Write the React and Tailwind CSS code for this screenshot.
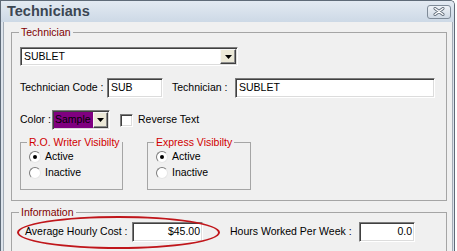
import React from 'react';

const sunken =
  'border border-t-[#7c7c7c] border-l-[#7c7c7c] border-b-white border-r-white shadow-[inset_1px_1px_0_#404040,inset_-1px_-1px_0_#dcdcdc] bg-white';
const raised =
  'border border-t-[#f6f6f6] border-l-[#f6f6f6] border-b-[#404040] border-r-[#404040] shadow-[inset_-1px_-1px_0_#8c8c8c] bg-[#ece9d8]';

const Arrow = () => (
  <svg width="7" height="4" viewBox="0 0 7 4">
    <polygon points="0,0 7,0 3.5,4" fill="#000" />
  </svg>
);

const CloseButton = () => (
  <div className="w-[24px] h-[14px] rounded-[3px] border border-[#7f8b98] bg-gradient-to-b from-[#eef2f7] to-[#cfd9e4] flex items-center justify-center">
    <svg width="12" height="9" viewBox="0 0 12 9">
      <path d="M2 1.5 L10 7.5 M10 1.5 L2 7.5" stroke="#5f6b78" strokeWidth="3" strokeLinecap="round" />
      <path d="M2 1.5 L10 7.5 M10 1.5 L2 7.5" stroke="#ffffff" strokeWidth="1.4" strokeLinecap="round" />
    </svg>
  </div>
);

const Field = ({ className, children, right }) => (
  <div className={`h-[20px] shrink-0 ${sunken} flex items-center ${right ? 'justify-end pr-[2px]' : 'pl-[3px]'} ${className}`}>
    {children}
  </div>
);

const Radio = ({ checked, label }) => (
  <div className="h-[16px] flex items-center gap-[4px]">
    <div className="w-[12px] h-[12px] rounded-full border border-t-[#7c7c7c] border-l-[#7c7c7c] border-b-[#e6e6e6] border-r-[#e6e6e6] bg-white flex items-center justify-center">
      {checked && <div className="w-[4px] h-[4px] rounded-full bg-black" />}
    </div>
    <span>{label}</span>
  </div>
);

const SubGroup = ({ title, className }) => (
  <fieldset className={`h-[54px] shrink-0 border border-[#a5a5a5] ${className}`}>
    <legend className="ml-[6px] px-[2px] leading-[13px] text-[#d00000]">{title}</legend>
    <div className="pl-[8px]">
      <Radio checked label="Active" />
      <Radio label="Inactive" />
    </div>
  </fieldset>
);

export default function App() {
  return (
    <div className="w-[457px] h-[251px] overflow-hidden bg-white font-['Liberation_Sans',Arial,sans-serif] text-[10.5px] text-black whitespace-nowrap">
      <div className="w-[455px] h-[251px] flex flex-col border-t border-l border-r border-[#5f6b78] rounded-tr-[5px] bg-[#dde4ec]">
        {/* Title bar */}
        <div className="h-[21px] shrink-0 flex items-center justify-between pl-[6px] pr-[3px] bg-gradient-to-b from-[#e3eaf2] to-[#cdd9e6] rounded-tr-[4px]">
          <span className="text-[14.5px] font-bold text-[#3b4652] leading-none">Technicians</span>
          <CloseButton />
        </div>

        {/* Body */}
        <div className="flex-1 min-h-0 overflow-hidden ml-[2px] mr-[1px] bg-[#f0f0f0] border-l border-r border-[#a3acb6] pl-[7px]">
          <fieldset className="mt-[4px] w-[436px] h-[175px] border border-[#a5a5a5]">
            <legend className="ml-[7px] px-[2px] leading-[13px] text-[#800000]">Technician</legend>
            <div className="pl-[8px] pt-[8px]">
              <div className={`w-[218px] h-[19px] ${sunken} flex items-center justify-between pl-[3px] pr-[1px]`}>
                <span>SUBLET</span>
                <div className={`w-[16px] h-[15px] ${raised} flex items-center justify-center`}>
                  <Arrow />
                </div>
              </div>

              <div className="mt-[12px] flex items-center">
                <span className="w-[87px] shrink-0">Technician Code :</span>
                <Field className="w-[56px]">SUB</Field>
                <span className="ml-[9px] w-[63px] shrink-0">Technician :</span>
                <Field className="w-[200px]">SUBLET</Field>
              </div>

              <div className="mt-[12px] h-[20px] flex items-center">
                <span className="w-[32px] shrink-0">Color :</span>
                <div className={`w-[58px] h-[20px] shrink-0 ${sunken} flex items-center p-[1px]`}>
                  <div className="flex-1 h-full bg-[#800080] pl-[1px] flex items-center">Sample</div>
                  <div className={`w-[15px] h-full ${raised} flex items-center justify-center`}>
                    <Arrow />
                  </div>
                </div>
                <div className={`ml-[10px] w-[13px] h-[13px] shrink-0 ${sunken}`} />
                <span className="ml-[5px]">Reverse Text</span>
              </div>

              <div className="mt-[6px] flex">
                <SubGroup title="R.O. Writer Visibilty" className="w-[103px]" />
                <SubGroup title="Express Visibilty" className="ml-[24px] w-[104px]" />
              </div>
            </div>
          </fieldset>

          <fieldset className="mt-[5px] w-[436px] h-[60px] border border-[#a5a5a5]">
            <legend className="ml-[7px] px-[2px] leading-[13px] text-[#800000]">Information</legend>
            <div className="pl-[13px] pt-[3px] flex items-center">
              <div className="relative flex items-center">
                <span className="w-[107px] shrink-0">Average Hourly Cost :</span>
                <Field className="w-[71px]" right>$45.00</Field>
                <div className="absolute left-[-8px] top-[-6px] w-[203px] h-[33px] rounded-[50%] border-2 border-[#c0161b] pointer-events-none" />
              </div>
              <span className="ml-[27px] w-[129px] shrink-0">Hours Worked Per Week :</span>
              <Field className="w-[56px]" right>0.0</Field>
            </div>
          </fieldset>
        </div>
      </div>
    </div>
  );
}
